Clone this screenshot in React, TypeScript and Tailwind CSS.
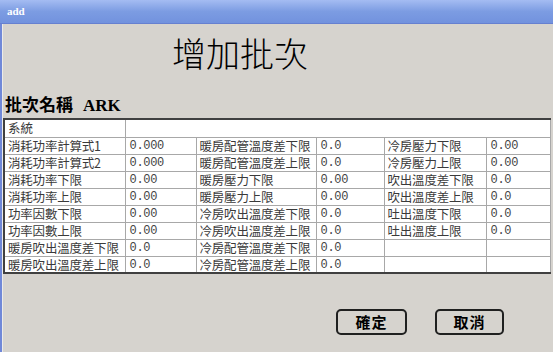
import React from "react";

const rows: string[][] = [
  ["消耗功率計算式1", "0.000", "暖房配管溫度差下限", "0.0", "冷房壓力下限", "0.00"],
  ["消耗功率計算式2", "0.000", "暖房配管溫度差上限", "0.0", "冷房壓力上限", "0.00"],
  ["消耗功率下限", "0.00", "暖房壓力下限", "0.00", "吹出溫度差下限", "0.0"],
  ["消耗功率上限", "0.00", "暖房壓力上限", "0.00", "吹出溫度差上限", "0.0"],
  ["功率因數下限", "0.00", "冷房吹出溫度差下限", "0.0", "吐出溫度下限", "0.0"],
  ["功率因數上限", "0.00", "冷房吹出溫度差上限", "0.0", "吐出溫度上限", "0.0"],
  ["暖房吹出溫度差下限", "0.0", "冷房配管溫度差下限", "0.0", "", ""],
  ["暖房吹出溫度差上限", "0.0", "冷房配管溫度差上限", "0.0", "", ""],
];

const cjk = { fontFamily: '"Noto Sans CJK TC", "Noto Sans CJK SC", sans-serif' };
const mono = { fontFamily: '"Liberation Mono", "Noto Sans CJK TC", monospace' };

export default function App() {
  return (
    <div className="w-[553px] h-[352px] bg-[#d6d3ce] overflow-hidden flex flex-col" style={cjk}>
      <div className="h-[24px] shrink-0 bg-gradient-to-b from-[#a4bcf2] via-[#7c9ce2] to-[#7292de] border-b border-[#6680d0] flex items-center pl-[7px]">
        <span className="text-white text-[11px] font-bold leading-none" style={{ fontFamily: '"Liberation Serif", serif' }}>add</span>
      </div>
      <div className="flex-1 flex">
        <div className="w-[2px] bg-[#7088d8] shrink-0" />
        <div className="w-[1px] bg-[#ecebe8] shrink-0" />
        <div className="flex-1 flex flex-col">
          <div className="mt-[12px] pl-[169px] h-[34px] text-[34px] leading-[34px] text-black font-light">增加批次</div>
          <div className="mt-[25px] pl-[2px] h-[17px] text-[17px] leading-[17px] font-bold text-black">
            批次名稱<span className="ml-[10px]" style={{ fontFamily: '"Liberation Serif", serif' }}>ARK</span>
          </div>
          <table className="mt-[6px] border-collapse bg-white text-[12.5px] text-[#3a3a3a] w-[546px] table-fixed border-t-2 border-l-2 border-r border-b-2 border-t-[#404040] border-l-[#404040] border-r-[#808080] border-b-[#404040]">
            <colgroup>
              <col className="w-[121px]" />
              <col className="w-[71px]" />
              <col className="w-[120px]" />
              <col className="w-[68px]" />
              <col className="w-[102px]" />
              <col className="w-[64px]" />
            </colgroup>
            <tbody>
              <tr className="h-[18px]">
                <td className="border border-[#a8a8a8] pl-[3px] p-0 leading-[16px] align-middle whitespace-nowrap">系統</td>
                <td colSpan={5} className="border border-[#a8a8a8] p-0" />
              </tr>
              {rows.map((r, i) => (
                <tr key={i} className="h-[17px]">
                  {r.map((c, j) => (
                    <td
                      key={j}
                      className={`border border-[#a8a8a8] p-0 align-middle whitespace-nowrap overflow-hidden ${j % 2 === 1 ? "pl-[4px]" : "pl-[3px]"}`}
                    >
                      <div
                        className={j % 2 === 1 ? "pt-[2px] h-[15px] leading-[13px] text-[12px] tracking-[-0.3px] text-[#444]" : "h-[15px] leading-[15px] tracking-[-0.2px]"}
                        style={j % 2 === 1 ? mono : undefined}
                      >
                        {c}
                      </div>
                    </td>
                  ))}
                </tr>
              ))}
            </tbody>
          </table>
          <div className="mt-[35px] flex pl-[333px] gap-[28px]">
            <div className="w-[71px] h-[26px] rounded-[5px] border-2 border-[#202020] flex items-center justify-center text-[15px] font-bold text-black tracking-[1px]">確定</div>
            <div className="w-[69px] h-[26px] rounded-[5px] border-2 border-[#202020] flex items-center justify-center text-[15px] font-bold text-black tracking-[1px]">取消</div>
          </div>
        </div>
      </div>
    </div>
  );
}
